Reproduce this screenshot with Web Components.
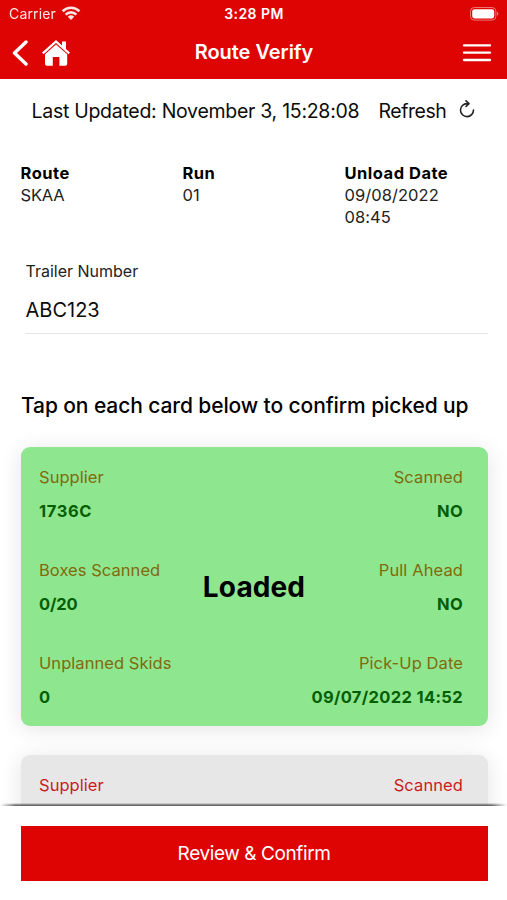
<!DOCTYPE html>
<html lang="en">
<head>
<meta charset="utf-8">
<title>Route Verify</title>
<style>
body{margin:0;background:#fff;color:#0c0c0c;font-family:Inter,"Liberation Sans",sans-serif;overflow:hidden}
</style>
</head>
<body>
<route-app></route-app>
<script>
const define = (name, html) => customElements.define(name, class extends HTMLElement {
  constructor() {
    super();
    this.attachShadow({mode: 'open'}).innerHTML = html;
  }
});

define('status-bar', `<style>
:host{display:grid;grid-template-columns:1fr auto 1fr;align-items:center;height:27px;padding:0 8px 0 9px;color:#fff;font-size:14px;line-height:27px}
.l{display:flex;align-items:center;gap:6px;letter-spacing:.15px;opacity:.9}
.t{font-weight:600;font-size:14px;letter-spacing:.45px}
.r{display:flex;justify-content:flex-end}
svg{display:block}
.l svg{margin-left:-1px}
</style>
<div class="l"><span>Carrier</span><svg width="20" height="15" viewBox="0 0 20 15" fill="none" stroke="#fff" stroke-width="2.6"><path d="M1.6 5.3C6.4.6 13.6.6 18.4 5.3M4.6 8.6c3.1-3 7.7-3 10.8 0"/><path d="M6.8 10.7c1.8-1.8 4.6-1.8 6.4 0L10 14z" fill="#fff" stroke="none"/></svg></div>
<span class="t">3:28 PM</span>
<div class="r"><svg width="29" height="14" viewBox="0 0 29 14"><rect x=".5" y=".5" width="25.4" height="12.6" rx="3.8" fill="none" stroke="#fff" stroke-opacity=".45"/><rect x="2.2" y="2.2" width="22" height="9.2" rx="2.3" fill="#fff"/><path d="M27 4.8q2.6 2 0 4z" fill="#fff" fill-opacity=".5"/></svg></div>`);

define('nav-bar', `<style>
:host{display:grid;grid-template-columns:1fr auto 1fr;align-items:center;height:52px;padding:0 15px 0 12px;color:#fff}
.l{display:flex;gap:14px;align-items:center}
.r{display:flex;justify-content:flex-end}
h1{margin:0;font-size:20px;font-weight:600;line-height:24px;letter-spacing:-.03px;padding:0 0 2px 4px}
svg{display:block}
.l svg{margin-top:-1px}
</style>
<div class="l"><svg width="16" height="26" viewBox="0 0 16 26" fill="none" stroke="#fff" stroke-width="3.4" stroke-linecap="round" stroke-linejoin="round"><path d="M14 2 2.5 13 14 24"/></svg>
<svg width="28" height="26" viewBox="0 0 28 26" fill="#fff"><path d="M14 0 0 12.6l1.5 1.7L14 3l12.5 11.3 1.5-1.7-4-3.6V1.5h-4v3.9z"/><path d="M14 4.4 3 14.3V24q0 1.8 1.8 1.8h6V17h6.6v8.8h6q1.8 0 1.8-1.8v-9.7z"/></svg></div>
<h1><slot></slot></h1>
<div class="r"><svg width="30" height="20" viewBox="0 0 30 20" stroke="#fff" stroke-width="2.3" stroke-linecap="round"><path d="M2 2.4h26M2 9.7h26M2 17h26"/></svg></div>`);

define('app-header', `<style>
:host{display:block;height:79px;background:#df0404}
</style><status-bar></status-bar><nav-bar><slot></slot></nav-bar>`);

define('update-line', `<style>
:host{display:flex;align-items:center;height:24px;padding:20px 0 .5px 31.5px;font-size:19.5px;line-height:24px;white-space:nowrap}
.d{letter-spacing:-.28px;width:347px}
.f{letter-spacing:-.45px;width:80px}
svg{display:block;margin-top:-4px}
</style>
<span class="d"><slot></slot></span><span class="f">Refresh</span>
<svg width="16" height="18" viewBox="0 0 16 18" fill="none" stroke="#222" stroke-width="1.6" stroke-linecap="round" stroke-linejoin="round"><path d="M10 3.6H8A6.5 6.5 0 1 0 14.5 10M7 .8l3 2.8-3 2.9"/></svg>`);

define('info-field', `<style>
:host{display:block;font-size:16.5px;line-height:22px}
b{display:block;font-weight:700;letter-spacing:.5px;color:#000}
div{color:#222;letter-spacing:var(--ls,0)}
</style><b><slot name="label"></slot></b><div><slot></slot></div>`);

define('text-field', `<style>
:host{display:block;margin:32px 19px 0 25px;border-bottom:1px solid #e6e6e6}
.l{font-size:16px;line-height:22px;color:#222;padding-left:.5px;letter-spacing:0}
.v{font-size:20px;line-height:24px;padding:16px 0 10.5px .5px;letter-spacing:0}
</style><div class="l"><slot name="label"></slot></div><div class="v"><slot></slot></div>`);

define('card-cell', `<style>
:host{display:block;height:93px;white-space:nowrap}
:host([end]){text-align:right}
.l{font-size:16.5px;line-height:22px;color:var(--label);letter-spacing:.05px}
.v{font-size:16.5px;line-height:22px;margin-top:12px;font-weight:700;color:#045f04;letter-spacing:var(--ls,.35px)}
:host([end]) .l{letter-spacing:.1px}
</style><div class="l"><slot name="label"></slot></div><div class="v"><slot></slot></div>`);

define('supplier-card', `<style>
:host{--label:#c91c22;box-sizing:border-box;display:grid;grid-template-columns:1fr 1fr;grid-auto-rows:93px;position:relative;height:279px;margin:0 19.5px 29px 20.5px;padding:19px 24.5px 0 18.5px;border-radius:9px;background:#e7e7e7;box-shadow:0 3px 22px rgba(0,0,0,.11)}
:host([loaded]){--label:#806b0d;background:#8ee68f}
.s{position:absolute;inset:0;display:grid;place-items:center;font-size:28px;font-weight:700;color:#000;letter-spacing:.13px}
</style><slot></slot><div class="s"><slot name="state"></slot></div>`);

define('action-footer', `<style>
:host{position:absolute;left:0;right:0;bottom:0;height:94px;box-sizing:border-box;padding:20px 19.5px 0 20.5px;background:#fff}
.e{position:absolute;left:0;right:0;top:-3px;height:3px;background:linear-gradient(#0000,#0007 60%,#0009);mask-image:linear-gradient(90deg,#0000,#000 3%,#000 97%,#0000)}
button{display:block;width:100%;height:54.5px;border:0;padding:0;background:#df0404;color:#fff;font:400 19px Inter,"Liberation Sans",sans-serif;letter-spacing:-.41px}
</style><div class="e"></div><button><slot></slot></button>`);

define('route-app', `<style>
:host{display:block;position:relative;width:507px;height:900px;overflow:hidden}
.info{display:grid;grid-template-columns:162px 162px 1fr;margin:38.5px 0 0 20.5px}
h2{margin:59.5px 0 29px 21px;font-size:21px;font-weight:500;line-height:25px;letter-spacing:-.1px;color:#000;white-space:nowrap}
</style>
<app-header>Route Verify</app-header>
<update-line>Last Updated: November 3, 15:28:08</update-line>
<div class="info">
<info-field style="--ls:-.2px"><span slot="label">Route</span>SKAA</info-field>
<info-field><span slot="label">Run</span>01</info-field>
<info-field style="--ls:.05px"><span slot="label">Unload Date</span>09/08/2022<br>08:45</info-field>
</div>
<text-field><span slot="label">Trailer Number</span>ABC123</text-field>
<h2>Tap on each card below to confirm picked up</h2>
<supplier-card loaded>
<card-cell style="--ls:.6px"><span slot="label">Supplier</span>1736C</card-cell>
<card-cell end><span slot="label">Scanned</span>NO</card-cell>
<card-cell style="--ls:-.1px"><span slot="label">Boxes Scanned</span>0/20</card-cell>
<card-cell end><span slot="label">Pull Ahead</span>NO</card-cell>
<card-cell><span slot="label">Unplanned Skids</span>0</card-cell>
<card-cell end><span slot="label">Pick-Up Date</span>09/07/2022 14:52</card-cell>
<span slot="state">Loaded</span>
</supplier-card>
<supplier-card>
<card-cell><span slot="label">Supplier</span></card-cell>
<card-cell end><span slot="label">Scanned</span></card-cell>
</supplier-card>
<action-footer>Review &amp; Confirm</action-footer>`);
</script>
</body>
</html>
